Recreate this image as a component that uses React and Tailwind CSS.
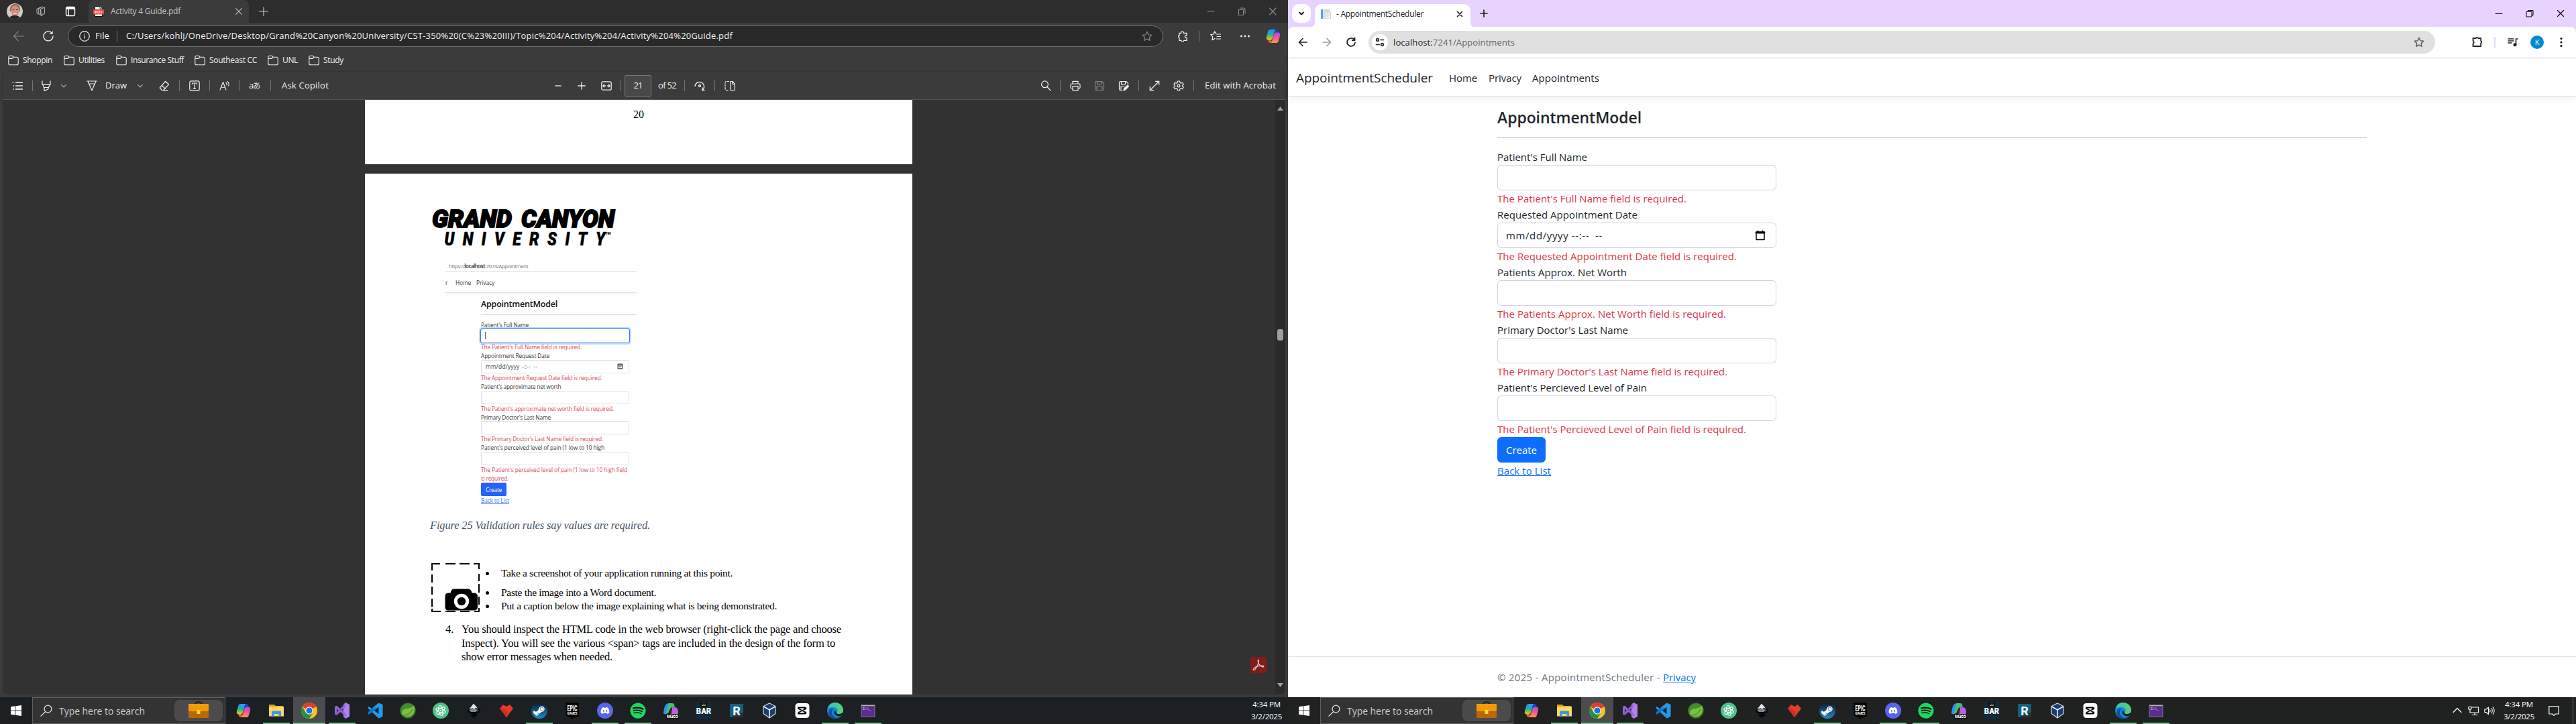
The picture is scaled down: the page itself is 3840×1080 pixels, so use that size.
import React, { useLayoutEffect, useRef } from "react";
import { FaDiscord, FaSpotify, FaSteamSymbol } from "react-icons/fa";

/* Single line of text whose letter spacing is adjusted to fill the width w. */
function T({ w, className = "", children }) {
  const ref = useRef(null);
  useLayoutEffect(() => {
    const el = ref.current;
    el.style.letterSpacing = "0px";
    const natural = el.getBoundingClientRect().width;
    const n = el.textContent.length;
    if (w && n > 1) el.style.letterSpacing = (w - natural) / n + "px";
  }, [w]);
  return (
    <span ref={ref} className={"inline-block shrink-0 whitespace-pre " + className}>
      {children}
    </span>
  );
}

/* Outline icon on a 16-unit grid. */
function Ic({ d, className = "", sw = 1.1, children }) {
  return (
    <svg viewBox="0 0 16 16" className={"h-4 w-4 shrink-0 " + className} fill="none" stroke="currentColor" strokeWidth={sw} strokeLinecap="round" strokeLinejoin="round">
      {d && <path d={d} />}
      {children}
    </svg>
  );
}

const Sep = ({ className = "" }) => <div className={"h-4 w-px shrink-0 bg-[#757575] " + className} />;

function Copilot({ className = "", id }) {
  return (
    <svg viewBox="0 0 24 24" className={"shrink-0 " + className}>
      <defs>
        <linearGradient id={id + "a"} x1="0" y1="0" x2="0" y2="1">
          <stop offset="0" stopColor="#1f9cf5" />
          <stop offset=".45" stopColor="#22a7b8" />
          <stop offset=".7" stopColor="#6fc04a" />
          <stop offset="1" stopColor="#f2c915" />
        </linearGradient>
        <linearGradient id={id + "b"} x1="0" y1="0" x2="0" y2="1">
          <stop offset="0" stopColor="#a04cf0" />
          <stop offset=".5" stopColor="#f0559b" />
          <stop offset="1" stopColor="#ff9a3c" />
        </linearGradient>
      </defs>
      <path d="M13 1h4c1.600 0 2.200 1.200 2.800 3l.9 2.600H16z" fill="#1247c4" />
      <path d="M11 23H7c-1.600 0-2.200-1.200-2.800-3l-.9-2.600H8z" fill="#f4562c" />
      <path d="M7.500 1H17c-1.700 0-2.400 1.200-2.900 3L10.800 15c-.5 1.800-1.300 3-3.100 3H4c-2.600 0-3.700-2-3-5L3.400 4.500C4.200 2 5.500 1 7.500 1z" fill={`url(#${id}a)`} />
      <path d="M16.500 23H7c1.700 0 2.400-1.200 2.900-3l3.300-11c.5-1.800 1.300-3 3.100-3H20c2.600 0 3.700 2 3 5l-2.400 8.500c-.8 2.500-2.100 3.500-4.100 3.500z" fill={`url(#${id}b)`} />
    </svg>
  );
}

/* ---------- Dark browser with the PDF ---------- */

const STAR = "M8 1.300l2 4.400 4.800.6-3.500 3.300.9 4.800L8 12l-4.200 2.400.9-4.800L1.200 6.300 6 5.700z";

function Avatar() {
  return (
    <svg viewBox="0 0 24 24" className="ml-2.5 h-6 w-6 shrink-0">
      <clipPath id="av"><circle cx="12" cy="12" r="12" /></clipPath>
      <g clipPath="url(#av)">
        <rect width="24" height="24" fill="#cfcac6" />
        <path d="M5 12C4 3 9 1 13 1s8 3 6.500 11z" fill="#8d6650" />
        <ellipse cx="12.500" cy="11" rx="6" ry="8" fill="#cf917c" />
        <path d="M3 24c1-5 5-6 9-6s8 1 9 6z" fill="#2c2429" />
        <path d="M9 9.500h2.500M14 9.500h2.500" stroke="#5d3a30" strokeWidth="1" />
        <path d="M9.500 14q3 1.800 6 0-.6 2.200-3 2.200t-3-2.200z" fill="#f3e3dc" />
      </g>
    </svg>
  );
}

function PdfFile() {
  return (
    <svg viewBox="0 0 16 16" className="ml-[7px] h-4 w-4 shrink-0">
      <path d="M2.500 .5h7.500l3.500 3.500v11.500h-11z" fill="#fff" stroke="#111" />
      <path d="M10 .5v3.500h3.500" fill="#fff" stroke="#111" strokeWidth=".8" />
      <rect x="0" y="5" width="16" height="7.500" rx="1" fill="#f0413c" />
      <text x="8" y="11" fontSize="6" fontWeight="700" fontFamily="Open Sans, sans-serif" textAnchor="middle" fill="#fff" textLength="12">PDF</text>
    </svg>
  );
}

function Folder() {
  return <Ic className="text-[#f2f2f2]" d="M.8 3.200a2 2 0 012-2h3.400l2 2h5a2 2 0 012 2v7.600a2 2 0 01-2 2H2.800a2 2 0 01-2-2zM.8 5.400h5.400l2-2.200" />;
}

const BOOKMARKS = [
  ["Shoppin", 44, 17], ["Utilities", 39, 17], ["Insurance Stuff", 79, 16],
  ["Southeast CC", 71, 16], ["UNL", 23, 16], ["Study", 30, 0],
];

function EdgeChrome() {
  return (
    <>
      <div className="flex h-[34px] items-center bg-[#2d2d2d] text-[#c4c4c4]">
        <Avatar />
        <Ic className="ml-5 text-[#b0b0b0]" d="M6.500 4.500l6-2.500v8.500l-5 4zM6.500 4.500v8l1 2M3.700 3.700L9.500 1M3.700 3.700v7.500l1.500 1.800M1 4.500L6 2M1 4.500v5.500l2 2" />
        <Ic className="ml-[27px] text-white" sw={1.400}>
          <rect x="1.500" y="1.500" width="13" height="13" rx="2.200" />
          <path d="M2 4.200h12M5 5v9" />
          <path d="M2.500 3h11" strokeWidth="2" />
        </Ic>
        <div className="ml-[19px] flex h-[34px] w-[239px] shrink-0 items-center rounded-t-lg bg-[#3b3b3b]">
          <PdfFile />
          <T w={104} className="ml-2.5 text-[12px]">Activity 4 Guide.pdf</T>
          <Ic className="ml-[79px]" d="M3.700 3.700l8.600 8.600M12.300 3.700l-8.600 8.600" />
        </div>
        <Ic className="ml-[14px] text-[#d0d0d0]" d="M8 1.500v13M1.500 8h13" />
        <div className="ml-auto mr-[15px] flex items-center gap-[30px] text-[#8c8c8c]">
          <Ic d="M3 8h10" />
          <Ic d="M3.500 5.500h7v8h-7zM6 3h5a2 2 0 012 2v6" />
          <Ic d="M3.500 3l9.500 10M13 3l-9.500 10" />
        </div>
      </div>

      <div className="flex h-10 items-center text-[#f2f2f2]">
        <Ic className="ml-5 text-[#8a8a8a]" d="M15.500 8H.7M7.300 1.200L.7 8l6.600 6.800" />
        <Ic className="ml-7" sw={1.300} d="M13.500 3.600A7 7 0 1015 8M14 .8v3.600h-3.700" />
        <div className="ml-[21px] flex h-8 w-[1633px] shrink-0 items-center rounded-full border border-[#707070] bg-[#292929]">
          <Ic className="ml-4" sw={1.200}>
            <circle cx="8" cy="8" r="7.300" />
            <path d="M8 7.200v4M8 4.600v.3" />
          </Ic>
          <T w={21} className="ml-2 text-[13px]">File</T>
          <Sep className="ml-[11px]" />
          <T w={904} className="ml-[13px] text-[13px]">C:/Users/kohlj/OneDrive/Desktop/Grand%20Canyon%20University/CST-350%20(C%23%20III)/Topic%204/Activity%204/Activity%204%20Guide.pdf</T>
          <Ic className="ml-auto mr-[15px] text-[#8a8a8a]" d={STAR} />
        </div>
        <Ic className="ml-[21px]" sw={1.300} d="M3 3.500h2.500a2 2 0 014-.6v.6H14v3.400h-1.400a1.800 1.800 0 000 3.400H14v4H9.700a2 2 0 01-3.900 0H3v-4A2 2 0 012 7.200h1z" />
        <Sep className="ml-4 bg-[#5c5c5c]" />
        <Ic className="ml-4" sw={1.200} d="M11 5H9L6.800.8 4.700 5 .7 5.700l3 3.200-.6 4.800L6.800 11.500M9.500 5h6M10 8.500h5.500M9 12h6.500" />
        <Ic className="ml-7">
          <circle cx="2.500" cy="8" r=".9" fill="currentColor" />
          <circle cx="8" cy="8" r=".9" fill="currentColor" />
          <circle cx="13.500" cy="8" r=".9" fill="currentColor" />
        </Ic>
        <Copilot id="tb" className="ml-[23px] h-[22px] w-[22px]" />
      </div>

      <div className="flex h-8 items-center pl-3 text-[12px] text-[#f2f2f2]">
        {BOOKMARKS.map(([name, w, gap]) => (
          <div key={name} className="flex items-center" style={{ marginRight: gap }}>
            <Folder />
            <T w={w} className="ml-1.5">{name}</T>
          </div>
        ))}
      </div>
    </>
  );
}

function PdfToolbar() {
  return (
    <div className="mx-1 mt-px flex h-[42px] shrink-0 items-center rounded-t-lg border-b border-[#555] bg-[#3b3b3b] text-[13px] text-[#f2f2f2] shadow-[0_0_2px_#222]">
      <Ic className="ml-3.5" sw={1.300} d="M5.500 3h10M5.500 8h10M5.500 13h10M1 3h.6M2 8h.6M2 13h.6" />
      <Sep className="ml-3.5" />
      <Ic className="ml-3" sw={1.200} d="M2 .8v5.400h12V.8M3 6.500l1.500 4h7l1.500-4M5 10.500v5l6-2.800v-2.200" />
      <Ic className="ml-2.5 text-[#a8a8a8]" d="M4.500 6.500L8 10l3.500-3.500" />
      <Ic className="ml-[26px]" sw={1.200} d="M.8 1h14.400M2 1.300L7.200 13l.8 2 .8-2L14 1.300M3.800 5h8.400" />
      <T w={32} className="ml-3">Draw</T>
      <Ic className="ml-3 text-[#a8a8a8]" d="M4.500 6.500L8 10l3.500-3.500" />
      <Ic className="ml-5" sw={1.200} d="M9.500 1.300l5 4.500-7.800 8.700H4.500L1.200 11zM4.200 7.500l5.200 4.700M6.500 14.800H13" />
      <Sep className="ml-3.5" />
      <Ic className="ml-3.5" sw={1.200}>
        <rect x=".8" y=".8" width="14.400" height="14.400" rx="2.500" />
        <path d="M4.500 5.500V4h7v1.500M8 4v8.300M6.500 12.300h3" />
      </Ic>
      <Sep className="ml-3.5" />
      <Ic className="ml-3.5" d="M1 14L5.500 2.500 10 14M2.500 10.300h6M10 3.500q1.500 1.500 1 3.500M12 1.500Q15 4 13.700 8" />
      <Sep className="ml-3.5" />
      <span className="ml-[13px] w-[18px] shrink-0 whitespace-nowrap text-[11px] tracking-[-1px] font-['Open_Sans','Noto_Sans_CJK_JP',sans-serif]"><b className="text-[13px] font-normal">a</b>あ</span>
      <Sep className="ml-3.5" />
      <T w={70} className="ml-4">Ask Copilot</T>

      <Ic className="ml-[334px] text-[#b0b0b0]" sw={2} d="M4 8h8" />
      <Ic className="ml-[19px]" sw={1.300} d="M8 2.800v10.400M2.800 8h10.400" />
      <Ic className="ml-[21px]" sw={1.300}>
        <rect x=".8" y="1.800" width="14.400" height="12.400" rx="2" />
        <path d="M3 8h3.500M9.500 8H13M4.500 6.300L3 8l1.500 1.700M11.500 6.300L13 8l-1.500 1.700" />
      </Ic>
      <Sep className="ml-3" />
      <div className="ml-1.5 flex h-8 w-10 shrink-0 items-center justify-center rounded-xs border border-[#777] bg-[#484848]"><T w={13}>21</T></div>
      <T w={27} className="ml-2.5">of 52</T>
      <Sep className="ml-3" />
      <Ic className="ml-3.5" sw={1.300} d="M1 8.500A6.800 6.800 0 1112 14.500M12 11v3.800h3.200">
        <circle cx="8" cy="8" r="1.500" />
      </Ic>
      <Sep className="ml-3.5" />
      <Ic className="ml-3.5" sw={1.200} d="M9 1.500h3l3.300 3.800v9.200H9zM12 1.500v4h3.300">
        <path d="M6.500 1.500h-3q-2.500 0-2.500 2.500v8q0 2.500 2.500 2.500h3" strokeDasharray="2.500 2" />
      </Ic>

      <div className="ml-auto mr-3.5 flex items-center">
        <Ic sw={1.200} d="M10.500 10l4.500 5.200"><circle cx="6.500" cy="5.800" r="4.900" /></Ic>
        <Sep className="ml-[13px]" />
        <Ic className="ml-3.5" sw={1.200} d="M4 5V1.300h8V5M4 12H2.500Q1 12 1 10.500v-4Q1 5 2.500 5h11Q15 5 15 6.500v4q0 1.500-1.500 1.500H12M4 8.800h8v6H4z" />
        <Ic className="ml-5 text-[#858585]" sw={1.200} d="M1.500 3q0-1.500 1.500-1.500h8.500L14.500 4v9q0 1.500-1.500 1.500H3q-1.500 0-1.500-1.500zM4.500 1.700v4h6v-4M4 14.500V9h8v5.500" />
        <Ic className="ml-5" sw={1.200} d="M6 14.500H3q-1.500 0-1.500-1.500V3q0-1.500 1.500-1.500h8.500L14.500 4v2M4.500 1.700v4h6v-4M4 14.500V9h5">
          <path d="M8 15l.7-3 5.300-5 1.500 1.800-5 5.200z" fill="currentColor" />
        </Ic>
        <Sep className="ml-3.5" />
        <Ic className="ml-[15px]" sw={1.300} d="M9.500 1.300h5.200V6.500M14.700 1.300L1.300 14.700M1.300 9.500v5.200h5.200" />
        <Ic className="ml-5" sw={1.200} d="M6.500 1h3l.5 2.300 1.500.8 2.200-.8 1.500 2.600L13.500 7.500v1l1.700 1.600-1.500 2.600-2.200-.8-1.500.8L9.500 15h-3L6 12.700l-1.500-.8-2.200.8L.8 10.100 2.500 8.500v-1L.8 5.900l1.500-2.600 2.200.8L6 3.300z"><circle cx="8" cy="8" r="1.900" /></Ic>
        <Sep className="ml-3.5" />
        <T w={106} className="ml-4">Edit with Acrobat</T>
      </div>
    </div>
  );
}

function GcuLogo() {
  return (
    <svg viewBox="0 0 276 67" className="ml-[98px] mt-[46px] h-[67px] w-[276px] shrink-0 overflow-visible" fontFamily="Roboto, sans-serif" fontStyle="italic" fontWeight="900" fill="#000" stroke="#000">
      <text x="2" y="33.500" fontSize="37" textLength="119" lengthAdjust="spacingAndGlyphs" strokeWidth="2">GRAND</text>
      <text x="135" y="33.500" fontSize="37" textLength="139" lengthAdjust="spacingAndGlyphs" strokeWidth="2">CANYON</text>
      <g transform="scale(.82 1)">
        <text x="25" y="61.500" fontSize="28" textLength="292" strokeWidth=".6">UNIVERSITY</text>
      </g>
      <text x="260" y="45" fontSize="5.500" strokeWidth="0" fontStyle="normal">TM</text>
    </svg>
  );
}

const SMALL_FIELDS = [
  ["Patient's Full Name", 71, ["The Patient's Full Name field is required."], [150], "focus"],
  ["Appointment Request Date", 102, ["The Appointment Request Date field is required."], [180.5], "date"],
  ["Patient's approximate net worth", 119.500, ["The Patient's approximate net worth field is required."], [198]],
  ["Primary Doctor's Last Name", 104, ["The Primary Doctor's Last Name field is required."], [182]],
  ["Patient's perceived level of pain (1 low to 10 high", 184, ["The Patient's perceived level of pain (1 low to 10 high field", "is required."], [218, 41]],
];

function EmbeddedShot() {
  return (
    <div className="ml-[120px] mt-4 h-[372px] w-[285px] shrink-0 text-[8.400px] leading-[13px] text-[#33373b]">
      <div className="flex h-[18px] items-center border-b-2 border-[#ececec] pl-[5px] text-[8px] text-[#777]">
        <T w={118}>https://<span className="font-semibold text-[#333]">localhost</span>:7074/Appointment</T>
      </div>
      <div className="flex h-[31px] items-center border-b border-[#e2e2e2] shadow-[0_3px_5px_rgba(0,0,0,0.04)]">
        <span className="w-[15px]">r</span>
        <T w={23}>Home</T>
        <T w={27} className="ml-2">Privacy</T>
      </div>
      <div className="ml-[53px] flex h-[33px] items-center border-b border-[#d5d5d5]">
        <T w={114} className="text-[12.500px] font-semibold text-[#111]">AppointmentModel</T>
      </div>
      <div className="ml-[53px] w-[221px] pt-2">
        {SMALL_FIELDS.map(([label, w, errs, ews, kind]) => (
          <div key={label}>
            <div className="h-[12.850px]"><T w={w}>{label}</T></div>
            <div className={"flex h-5 items-center rounded-xs bg-white pl-1.5 pr-2 " + (kind === "focus" ? "outline-1 outline-[#2b7bf5] ring-3 ring-[#c6dcfb]" : "border border-[#dfe1e4]")}>
              {kind === "focus" && <div className="h-[11px] w-px bg-[#666]" />}
              {kind === "date" && (
                <>
                  <T w={77}>mm/dd/yyyy --:--  --</T>
                  <Ic className="ml-auto h-[9px] w-[9px] text-[#444]" sw={2} d="M2 2h12v12H2zM2 5h12M5 9h6" />
                </>
              )}
            </div>
            {errs.map((e, i) => (
              <div key={e} className="h-[13px]"><T w={ews[i]} className="text-[#dc4a58]">{e}</T></div>
            ))}
          </div>
        ))}
        <div className="flex h-5 w-[38px] items-center justify-center rounded-xs bg-[#2563fb] text-white"><T w={24}>Create</T></div>
        <T w={42} className="text-[#3b7df5] underline">Back to List</T>
      </div>
    </div>
  );
}

function CameraBox() {
  return (
    <svg viewBox="0 0 72 73" className="h-[73px] w-[72px] shrink-0" fill="none" stroke="#000" strokeWidth="2">
      <path d="M1 11V1h12M21 1h15M42 1h15M63 1h8v8M71 16v11M71 31v13M71 50v12M71 67v5h-7M57 72H43M36 72H21M14 72H1v-4M1 17v12M1 35v12M1 53v12" />
      <path d="M25 45h4l1-3.500q.8-2.500 3.500-2.500h22q2.700 0 3.500 2.500l1 3.500h4q4.500 0 4.500 4.500v16q0 4.500-4.500 4.500H25q-4 0-4-4.500v-16q0-4.500 4-4.500z" fill="#000" strokeWidth="1" />
      <circle cx="45" cy="57" r="8.700" stroke="#fff" strokeWidth="5" />
    </svg>
  );
}

function PdfPage() {
  return (
    <div className="mt-3.5 flex h-[777px] flex-col overflow-hidden bg-white font-['Liberation_Serif',serif] text-[15.500px] text-black">
      <GcuLogo />
      <div className="font-['Open_Sans',sans-serif]"><EmbeddedShot /></div>
      <div className="ml-[97px] mt-3 flex h-6 shrink-0 items-center">
        <T w={328} className="text-[16.500px] italic text-[#44546a]">Figure 25 Validation rules say values are required.</T>
      </div>
      <div className="ml-[99px] mt-11 flex h-[73px] shrink-0">
        <CameraBox />
        <ul className="ml-[9px] pt-[5px] leading-5">
          {[["Take a screenshot of your application running at this point.", 345], ["Paste the image into a Word document.", 231], ["Put a caption below the image explaining what is being demonstrated.", 411]].map(([t, w], i) => (
            <li key={t} className={"flex h-5 items-center " + (i === 1 ? "mt-[9px]" : "")}>
              <span className="h-[5px] w-[5px] rounded-full bg-black" />
              <T w={w} className="ml-[18px]">{t}</T>
            </li>
          ))}
        </ul>
      </div>
      <div className="ml-[120px] mt-4 flex text-[16.500px] leading-[20.700px]">
        <span className="w-6">4.</span>
        <div className="flex flex-col items-start">
          <T w={566}>You should inspect the HTML code in the web browser (right-click the page and choose</T>
          <T w={557}>Inspect). You will see the various &lt;span&gt; tags are included in the design of the form to</T>
          <T w={225}>show error messages when needed.</T>
        </div>
      </div>
    </div>
  );
}

function EdgeWindow() {
  return (
    <div className="flex h-[1040px] flex-col bg-[#3b3b3b]">
      <EdgeChrome />
      <PdfToolbar />
      <div className="relative mx-1 flex h-[887px] overflow-hidden rounded-b-lg bg-[#323232]">
        <div className="ml-[540px] w-[816px]">
          <div className="flex h-24 items-start justify-center bg-white pt-3 font-['Liberation_Serif',serif] text-[16px] leading-5 text-black">20</div>
          <PdfPage />
        </div>
        <div className="ml-auto flex w-[15px] flex-col items-center bg-[#2b2b2b]">
          <svg viewBox="0 0 9 6" className="mt-[10px] h-[6px] w-[9px]"><path d="M0 6L4.500 0 9 6z" fill="#a0a0a0" /></svg>
          <div className="mt-[326px] h-[17px] w-[9px] rounded-[3px] bg-[#9f9f9f]" />
          <svg viewBox="0 0 9 6" className="mb-[11px] mt-auto h-[6px] w-[9px]"><path d="M0 0L4.500 6 9 0z" fill="#a0a0a0" /></svg>
        </div>
        <div className="absolute bottom-8 right-7 flex h-6 w-6 items-center justify-center rounded-[3px] bg-[#821c17]">
          <Ic className="h-[18px] w-[18px] text-[#d8c4c3]" sw={1.200} d="M8 1.200c-1.500 0-.5 5 2 7.300 2 2 5 2.700 5 1.500 0-1.800-7-1-10.500.5S.5 14.800 2 14.800C4 14.800 9.700 4 8 1.200z" />
        </div>
      </div>
    </div>
  );
}

/* ---------- Light browser with the form ---------- */

const FIELDS = [
  ["Patient's Full Name", 134, "The Patient's Full Name field is required.", 282],
  ["Requested Appointment Date", 209, "The Requested Appointment Date field is required.", 357],
  ["Patients Approx. Net Worth", 193, "The Patients Approx. Net Worth field is required.", 341],
  ["Primary Doctor's Last Name", 195, "The Primary Doctor's Last Name field is required.", 343],
  ["Patient's Percieved Level of Pain", 223, "The Patient's Percieved Level of Pain field is required.", 371],
];

function ChromeBar() {
  return (
    <>
      <div className="flex h-10 items-end bg-[#e8d3fe] text-[#202124]">
        <div className="mb-1.5 ml-1.5 flex h-7 w-7 items-center justify-center rounded-[10px] bg-white"><Ic sw={2} d="M5 6.500L8 9.500l3-3" /></div>
        <svg viewBox="0 0 6 6" className="h-1.5 w-1.5"><path d="M6 0v6H0q6 0 6-6z" fill="#fff" /></svg>
        <div className="flex h-[34px] w-[232px] items-center rounded-t-[10px] bg-white pb-1">
          <svg viewBox="0 0 16 16" className="ml-2 h-4 w-4 shrink-0">
            <rect x="5" y="1" width="9" height="12" fill="#e3e5e8" stroke="#c0c4c9" strokeWidth=".6" />
            <rect x="7" y="5" width="8.500" height="10" fill="#f3f4f6" stroke="#b5b9be" strokeWidth=".6" />
            <path d="M8.500 8h5M8.500 10h5M8.500 12h4M7 3h5" stroke="#b9bdc2" strokeWidth=".7" />
            <rect x="1" y="1" width="3" height="14" fill="#5ba4d8" />
            <rect x="4" y="1" width="1.500" height="14" fill="#d5e6f3" />
          </svg>
          <T w={130} className="ml-2 text-[12px]">- AppointmentScheduler</T>
          <Ic className="ml-[46px]" sw={1.700} d="M4.500 4.500l7 7M11.500 4.500l-7 7" />
        </div>
        <svg viewBox="0 0 6 6" className="h-1.5 w-1.5"><path d="M0 0v6h6Q0 6 0 0z" fill="#fff" /></svg>
        <Ic className="mb-3 ml-1.5" sw={1.700} d="M8 3v10M3 8h10" />
        <div className="mb-3 ml-auto mr-[15px] flex gap-[30px] text-black">
          <Ic d="M3 8.500h10" />
          <Ic d="M3.500 5.500h7.500v7.500H3.500zM5.500 5.500v-2h7.500v7.500h-2" sw={1} />
          <Ic d="M3.500 3.500l9 9M12.500 3.500l-9 9" />
        </div>
      </div>
      <div className="bg-[#e8d3fe]">
        <div className="flex h-[47px] items-center rounded-t-lg border-b border-[#cccccc] bg-white text-[#202124]">
          <Ic className="ml-3.5" sw={1.700} d="M14 8H2.500M8 2.500L2.500 8 8 13.500" />
          <Ic className="ml-5 text-[#9b9b9b]" sw={1.700} d="M2 8h11.500M8 2.500L13.500 8 8 13.500" />
          <Ic className="ml-5" sw={1.800} d="M13 4.500A6 6 0 1014 8.500M13.500 1.500v3.700H9.800" />
          <div className="ml-[18px] flex h-[34px] w-[1590px] items-center rounded-full bg-[#e0e0e0]">
            <div className="ml-[5px] flex h-6 w-6 items-center justify-center rounded-full bg-white">
              <Ic sw={1.700} d="M9 4.500h4.500M2.500 11.500H7"><circle cx="4.500" cy="4.500" r="1.800" /><circle cx="11.500" cy="11.500" r="1.800" /></Ic>
            </div>
            <T w={181} className="ml-2 text-[13px] text-[#5f6368]"><span className="text-[#202124]">localhost:</span>7241/Appointments</T>
            <Ic className="ml-auto mr-4 text-[#5f6368]" sw={1.500} d={STAR} />
          </div>
          <Ic className="ml-[55px]" sw={1.800} d="M1.500 2h4.300q1.700-1.800 3.400 0h4v4q1.800 1.500 0 3.500v4.500H1.500v-3.800q2.500-2.200 0-4.400z" />
          <div className="ml-[17px] h-4 w-0.5 bg-[#e8d3fe]" />
          <Ic className="ml-[18px]" sw={1.600} d="M1 3h8M1 6h8M1 9h5M12.500 11.500V3H15"><circle cx="11" cy="11.800" r="1.700" fill="currentColor" /></Ic>
          <div className="ml-[18px] flex h-5 w-5 items-center justify-center rounded-full bg-[#0288d1] text-[11px] text-white">K</div>
          <svg viewBox="0 0 16 16" className="ml-[18px] h-4 w-4"><circle cx="8" cy="2.500" r="1.500" /><circle cx="8" cy="8" r="1.500" /><circle cx="8" cy="13.500" r="1.500" /></svg>
        </div>
      </div>
    </>
  );
}

function ChromeWindow() {
  return (
    <div className="flex h-[1040px] flex-col bg-white text-[15px] leading-6 text-[#212529]">
      <ChromeBar />
      <nav className="flex h-[57px] shrink-0 items-center border-b border-[#dee2e6] pl-3 pt-0.5 shadow-[0_4px_12px_rgba(0,0,0,0.05)]">
        <T w={204} className="text-[19px]">AppointmentScheduler</T>
        <T w={42} className="ml-6">Home</T>
        <T w={49} className="ml-[17px]">Privacy</T>
        <T w={100} className="ml-4">Appointments</T>
      </nav>
      <main className="ml-[312px] w-[1296px]">
        <div className="mb-4 flex h-[62px] items-center border-b border-[#c4c6c8]">
          <T w={215} className="text-[23px] font-semibold">AppointmentModel</T>
        </div>
        {FIELDS.map(([label, w, err, ew], i) => (
          <div key={label} className="h-[86px]">
            <div className="h-6"><T w={w}>{label}</T></div>
            <div className="flex h-[38px] w-[416px] items-center rounded-md border border-[#ced4da] pl-3 pr-[15px]">
              {i === 1 && (
                <>
                  <T w={144}>mm/dd/yyyy --:--  --</T>
                  <Ic className="ml-auto text-black" sw={1.500} d="M2 3h12v11.500H2zM4.500 1.300v2M11.500 1.300v2"><path d="M2 4h12" strokeWidth="3" /></Ic>
                </>
              )}
            </div>
            <div className="h-6"><T w={ew} className="text-[#dc3545]">{err}</T></div>
          </div>
        ))}
        <div className="flex h-[38px] w-[72px] items-center justify-center rounded-md bg-[#0d6efd] text-white"><T w={46}>Create</T></div>
        <T w={80} className="text-[#0d6efd] underline">Back to List</T>
      </main>
      <footer className="mt-auto flex h-[61px] items-center border-t border-[#dee2e6] pl-[312px] text-[#6c757d]">
        <T w={247}>© 2025 - AppointmentScheduler - </T>
        <T w={49} className="text-[#0d6efd] underline">Privacy</T>
      </footer>
    </div>
  );
}

/* ---------- Taskbar ---------- */

const S = ({ children }) => <svg viewBox="0 0 24 24" className="h-6 w-6 overflow-visible">{children}</svg>;

function apps(id) {
  return [
    [<Copilot key="c" id={id} className="h-[22px] w-[22px]" />, false],
    [<S key="f"><path d="M1 3h8l2 2h11v15H1z" fill="#e0a010" /><path d="M1 6h22v14.500H1z" fill="#ffd766" /><path d="M5 21v-7q0-1.500 1.500-1.500h11Q19 12.500 19 14v7h-3.500v-4h-7v4z" fill="#3f97e0" /></S>, true],
    [<S key="ch"><circle cx="12" cy="12" r="12" fill="#fbc116" /><path d="M12 12L1.600 6A12 12 0 0122.400 6z" fill="#e33b2e" /><path d="M1.600 6A12 12 0 0012 24l5.200-9H6.800z" fill="#229342" /><path d="M12 6h10.400" stroke="#e33b2e" /><circle cx="12" cy="12" r="5.800" fill="#fff" /><circle cx="12" cy="12" r="4.600" fill="#1a73e8" /></S>, true],
    [<S key="vs"><path d="M1 6l3-1 14 12V7L4 19l-3-1z" fill="#8457c6" /><path d="M17 0l6 3v18l-6 3-3-3V3z" fill="#b27fef" /><path d="M1 6l3-1 14 12v5L4 9v7l13-9V1L4 14l-3 2z" fill="#9565d8" opacity=".9" /><path d="M4 9.500v5L6.500 12z" fill="#1c2023" /></S>, true],
    [<S key="vc"><path d="M17.500.5L23.500 3v18l-6 2.500L1 8l2-2 4 3L17.500.5zM17.500 7L11 12l6.500 5z" fill="#1f9cf0" fillRule="evenodd" /><path d="M7 9L1 15l2 3 14.500-11z" fill="#0b76c4" /></S>, false],
    [<S key="sp"><circle cx="12" cy="12" r="11" fill="#3f8f2e" /><circle cx="12" cy="12" r="11.500" fill="none" stroke="#3f8f2e" strokeDasharray="1.500 1.500" /><path d="M3 18C2 9 10 9 14 8.500S20 6 21 4c3 9-1 16-8 17-4 .5-7-1-10-3z" fill="#7cc043" /><path d="M4 19q10 1 15-9" fill="none" stroke="#2d6d20" /></S>, false],
    [<S key="at"><circle cx="12" cy="12" r="12" fill="#4cc38a" /><g fill="none" stroke="#fff" strokeWidth="1"><ellipse cx="12" cy="12" rx="7.500" ry="3" transform="rotate(20 12 12)" /><ellipse cx="12" cy="12" rx="7.500" ry="3" transform="rotate(80 12 12)" /><ellipse cx="12" cy="12" rx="7.500" ry="3" transform="rotate(140 12 12)" /></g><circle cx="12" cy="12" r="1.200" fill="#fff" /></S>, false],
    [<S key="in"><path d="M12 1l9 10q2 3-1 4l-4 1 2 3-6 4-5-4 2-2-5-2q-2-1-1-3z" fill="#08090a" /><path d="M12 1.500l6.500 7.500-3.500-1-2 2.500-2-2-5.500 1z" fill="#dfe6ee" /><path d="M5 11l7-2 7 2-4 3H8z" fill="#7e8893" /></S>, false],
    [<S key="h"><path d="M7 3l5 3 5-3 5 6-10 13L2 9z" fill="#e63a2b" /><path d="M2 9l10 13 4-5L8 9z" fill="#d02f22" /></S>, false],
    [<div key="st" className="flex h-6 w-6 items-center justify-center rounded-full bg-gradient-to-b from-[#0b1a38] to-[#1b8ec9]"><FaSteamSymbol className="h-[19px] w-[19px] text-white" /></div>, true],
    [<S key="ep"><path d="M2 0h20v19.500L12 24 2 19.500z" fill="#060606" /><text x="4.500" y="12.500" fontFamily="Roboto, sans-serif" fontSize="12" fontWeight="700" fill="#fff" textLength="15" lengthAdjust="spacingAndGlyphs">EPIC</text><text x="4.500" y="18" fontFamily="Roboto, sans-serif" fontSize="4.500" fontWeight="700" fill="#fff" textLength="15" lengthAdjust="spacingAndGlyphs">GAMES</text></S>, false],
    [<div key="di" className="flex h-6 w-6 items-center justify-center rounded-full bg-[#5865f2]"><FaDiscord className="h-3.5 w-3.5 text-white" /></div>, true],
    [<div key="so" className="flex h-6 w-6 items-center justify-center rounded-full bg-[#101214]"><FaSpotify className="h-6 w-6 text-[#1ed760]" /></div>, true],
    [<S key="m"><path d="M1 16Q2 1 9 1h6Q9 2 8 11L6 17q-4 1-5-1z" fill="#2f8df5" /><path d="M9 1h5q3 0 4 5l-4 1q-3 0-5 8l-5 2Q8 4 9 1z" fill="#43c36a" /><path d="M14 7h5q4 1 4 8l-1 3h-8z" fill="#a965f0" /><path d="M14 7l-2 10h8z" fill="#e052c2" opacity=".7" /><rect x="5" y="17" width="19" height="7" fill="#0b0c0d" /><text x="6" y="23" fontFamily="Roboto, sans-serif" fontSize="7" fontWeight="700" fill="#fff" textLength="17">M365</text></S>, false],
    [<S key="b"><rect width="24" height="24" fill="#0f2a3b" /><path d="M7 0l5 3 5-3v6H7z" fill="#070b10" /><path d="M9 4h6" stroke="#e8c63a" strokeWidth="1.500" /><text x=".8" y="16.500" fontFamily="Roboto, sans-serif" fontSize="12.500" fontWeight="900" fill="#fff" textLength="22.500" lengthAdjust="spacingAndGlyphs">BAR</text></S>, false],
    [<S key="r"><rect x="2" y="2" width="20" height="20" fill="#14607f" /><path d="M2 22h20v-8z" fill="#2a3338" /><text x="12" y="18.500" textAnchor="middle" fontFamily="Roboto, sans-serif" fontSize="18" fontWeight="700" fill="#fff">R</text></S>, false],
    [<S key="vb"><path d="M12 1l9 4.500v11L12 23l-9-6.500v-11z" fill="#1c3d70" stroke="#cfd9e8" strokeWidth="1.200" /><path d="M3.500 6L12 11l8.500-5M12 11v12" stroke="#fff" strokeWidth="1.500" fill="none" /></S>, false],
    [<S key="cc"><rect x="1.500" y="1" width="21" height="22" rx="4.500" fill="#fff" /><path d="M6 9V7.500h9.500V9L18 7.500M6 15v1.500h9.500V15l2.500 1.500M6 9l12 6M6 15l12-6" fill="none" stroke="#000" strokeWidth="1.800" /></S>, false],
    [<S key="e"><circle cx="12" cy="12" r="12" fill="#1587d6" /><path d="M1 9Q3 0 12 0q11 1 12 11 0 6-6 6-4 0-4-2 2-1 1.500-4Q14 7 9 7q-6 0-8 2z" fill="#3fc6b0" /><path d="M12 0q11 1 12 11 0 6-6 6-4 0-4-2 5-4 0-10T12 0z" fill="#5fd65b" opacity=".55" /><path d="M9 10q-5 6 1 11 3 3 8 1-5 4-11 1Q0 18 3 12q2-4 6-2z" fill="#0c4f9e" /><path d="M14 15q0 2 4 2 3 0 5-2l1 1-2 3q-5 3-9 0-4-3-2-7 2 2 3 3z" fill="#1c2023" /></S>, true],
    [<S key="t"><rect x="2" y="4" width="20" height="17" fill="#5c2d91" stroke="#8a8a8a" strokeWidth=".8" /><path d="M2 4.500h20" stroke="#b5b5b5" strokeWidth="1.500" /><text x="4" y="11" fontFamily="Liberation Mono, monospace" fontSize="5" fill="#fff">C:\_</text></S>, true],
  ];
}

function Taskbar({ right }) {
  return (
    <div className={"flex h-10 items-center " + (right ? "bg-[#202121]" : "bg-[#1c2023]")}>
      <svg viewBox="0 0 16 16" className="mx-4 h-4 w-4 shrink-0" fill="#fff"><path d="M0 2.200l6.500-.9v6.200H0zM7.300 1.200L16 0v7.500H7.300zM0 8.300h6.500v6.300L0 13.700zM7.300 8.300H16V16l-8.700-1.200z" /></svg>
      <div className="flex h-10 w-[288px] shrink-0 items-center border border-[#606060] bg-[#333333] pl-[11px] pr-[3px]">
        <Ic className="h-[18px] w-[18px] text-[#e2e2e2]" d="M6.500 9.800L.8 15.200"><circle cx="10.200" cy="5.800" r="4.800" /></Ic>
        <T w={128} className="ml-2.5 text-[14px] text-[#cfcfcf]">Type here to search</T>
        <div className="ml-auto flex h-8 w-[72px] items-center justify-center rounded-lg bg-[#4b4b4b]">
          <svg viewBox="0 0 32 28" className="h-7 w-8">
            <path d="M11 5q0-4 5-4t5 4" fill="none" stroke="#2d2320" strokeWidth="2" />
            <rect x="1" y="4" width="30" height="11" rx="1" fill="#f39a0b" />
            <rect x="1" y="15" width="30" height="10" rx="1" fill="#b96708" />
            <rect x="13.500" y="13" width="5" height="6" rx="1" fill="#ffd91f" />
          </svg>
        </div>
      </div>
      <div className="ml-0.5 flex">
        {apps(right ? "r" : "l").map(([icon, open], i) => (
          <div key={i} className={"flex h-10 w-[49px] flex-col items-center " + (i === 2 ? "bg-gradient-to-r from-transparent from-2% via-[#4a4c4f] via-2% to-[#4a4c4f]" : "")}>
            <div className="flex h-[38px] items-center pt-0.5">{icon}</div>
            <div className={"h-0.5 " + (open ? "bg-[#76c794] " : "") + (i === 2 ? "w-12" : "w-10")} />
          </div>
        ))}
      </div>
      <div className={"ml-auto flex items-center text-white " + (right ? "" : "mr-2")}>
        {right && (
          <div className="mr-[12px] flex items-center">
            <Ic sw={1.300} d="M2 10.500L8 4.500l6 6" />
            <Ic className="ml-2" sw={1.200} d="M5.500 3h10v8h-10M.8 2.500h4v3.500h-4zM3 6v5h3M10 11v3M6 14.500h8" />
            <Ic className="ml-2" sw={1.100} d="M.8 6h2.400L6.500 3v10.500L3.200 10.500H.8zM8.500 6.500q1.200 1.700 0 3.500M11 4.500q2.500 3.500 0 7.300M13.200 2.800q4 5.300 0 10.700" />
          </div>
        )}
        <div className="flex w-12 flex-col items-center text-[11.500px] leading-[18px]">
          <T w={42}>4:34 PM</T>
          <T w={46}>3/2/2025</T>
        </div>
        {right && (
          <>
            <Ic className="ml-5" sw={1.200} d="M.8 1.500h14.400v11.500h-5L8 15.300 5.800 13h-5z" />
            <div className="ml-5 mr-1 h-10 w-px bg-[#6a6a6a]" />
          </>
        )}
      </div>
    </div>
  );
}

export default function App() {
  return (
    <div className="grid h-[1080px] w-[3840px] grid-cols-2 overflow-hidden font-['Open_Sans','Noto_Sans',sans-serif]">
      <div className="flex flex-col"><EdgeWindow /><Taskbar /></div>
      <div className="flex flex-col"><ChromeWindow /><Taskbar right /></div>
    </div>
  );
}
